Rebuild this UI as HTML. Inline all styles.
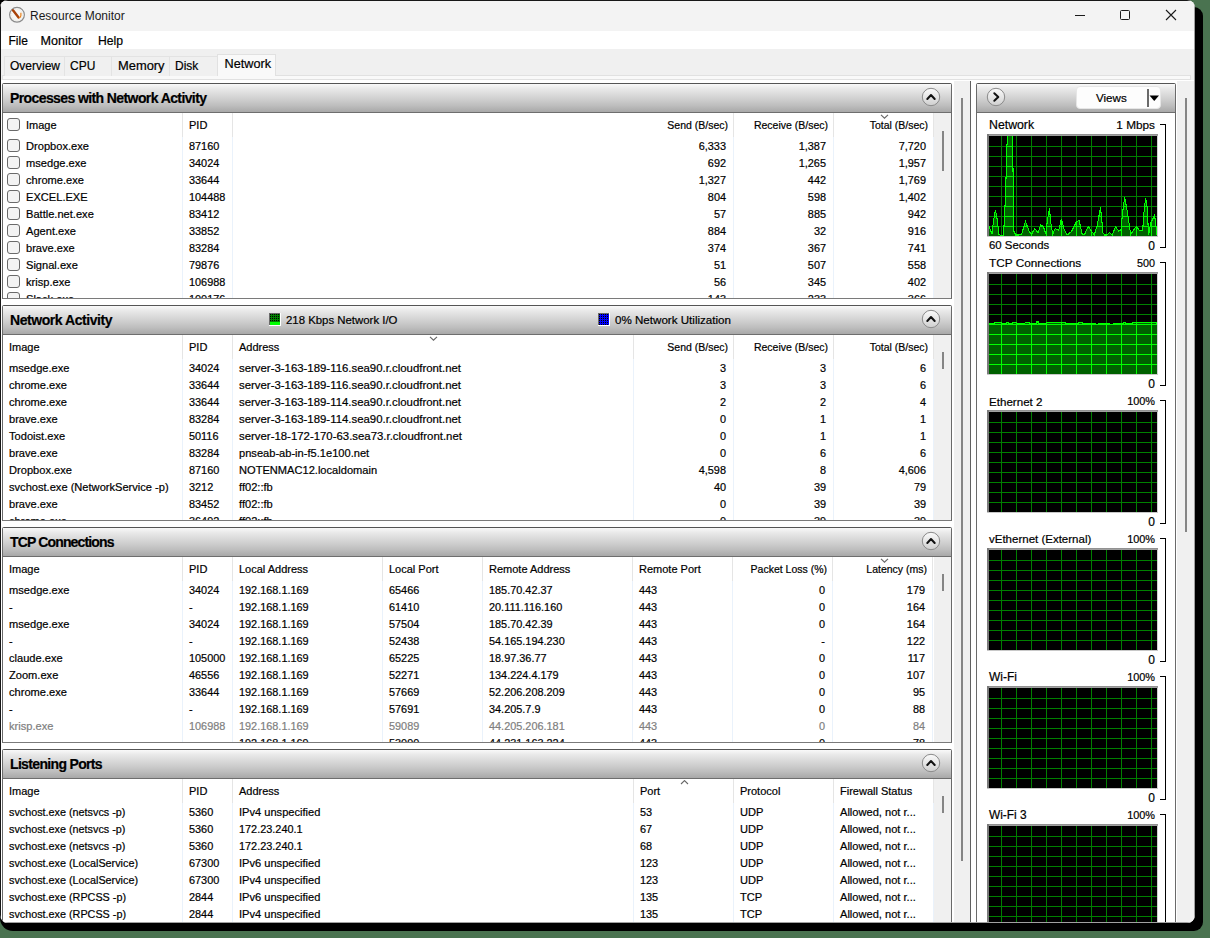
<!DOCTYPE html><html><head><meta charset="utf-8"><style>

html,body{margin:0;padding:0}
body{width:1210px;height:938px;position:relative;overflow:hidden;background:#4a7350;font-family:"Liberation Sans", sans-serif}
.t{position:absolute;white-space:pre;line-height:17px;height:17px;-webkit-text-stroke:0.2px currentColor}
.sec{position:absolute;left:2px;width:950px;box-sizing:border-box;border:1px solid #6a6a6a;border-top-color:#555;background:#fff;border-radius:2px 2px 0 0}
.hdr{position:absolute;left:3px;width:948px;height:28px;border-bottom:1px solid #6e6e6e;background:linear-gradient(#f9f9f9 0%,#e8e8e8 18%,#d2d2d2 50%,#bdbdbd 78%,#a8a8a8 100%)}
.cb{position:absolute;width:11px;height:11px;border:1px solid #6a6a6a;border-radius:3px;background:#f3f3f3}

</style></head><body>
<div style="position:absolute;left:0px;top:7px;width:1203px;height:924px;background:#000;border-radius:0 9px 9px 13px"></div>
<div style="position:absolute;left:0;top:0;width:10px;height:10px;background:#000"></div>
<div id="win" style="position:absolute;left:0;top:0;width:1195px;height:923px;background:#fff;border-radius:8px;overflow:hidden">
<div style="position:absolute;left:0;top:0;width:1195px;height:31px;background:#f3f3f3"></div>
<svg style="position:absolute;left:8px;top:6px" width="18" height="18"><circle cx="9" cy="8.8" r="7.4" fill="#f6f6f6" stroke="#8c8c8c" stroke-width="1.2"/><circle cx="9" cy="8.8" r="5.6" fill="none" stroke="#e2dccf" stroke-width="0.7" stroke-dasharray="1 1"/><polyline points="5,4.2 10.6,11.4" stroke="#a8420a" stroke-width="2.4" stroke-linecap="round"/><path d="M12.9,6.8 L12.9,9.6 Q12.9,11.6 10.9,11.8" fill="none" stroke="#e8801a" stroke-width="1.2"/></svg>
<div class="t" style="left:30px;top:8px;font-size:12px;color:#1a1a1a;font-weight:normal;-webkit-text-stroke:0;">Resource Monitor</div>
<div style="position:absolute;left:1075px;top:15px;width:10px;height:1px;background:#1a1a1a"></div>
<div style="position:absolute;left:1120px;top:10px;width:8px;height:8px;border:1px solid #1a1a1a;border-radius:1.5px"></div>
<svg style="position:absolute;left:1165px;top:9px" width="12" height="12"><path d="M1,1 L11,11 M11,1 L1,11" stroke="#1a1a1a" stroke-width="1.1"/></svg>
<div class="t" style="left:8.5px;top:33px;font-size:12px;color:#000;font-weight:normal;">File</div>
<div class="t" style="left:40.5px;top:33px;font-size:12.6px;color:#000;font-weight:normal;">Monitor</div>
<div class="t" style="left:98px;top:33px;font-size:12.2px;color:#000;font-weight:normal;">Help</div>
<div style="position:absolute;left:0;top:49px;width:1195px;height:31px;background:#f0f0f0"></div>
<div style="position:absolute;left:2px;top:75px;width:1189px;height:5px;box-sizing:border-box;border:1px solid #e1e1e1;background:#f9f9f9"></div>
<div style="position:absolute;left:4px;top:56px;width:61px;height:20px;box-sizing:border-box;border:1px solid #e3e3e3;border-bottom:none;background:#f0f0f0"></div>
<div class="t" style="left:10px;top:58px;font-size:12px;color:#000;font-weight:normal;">Overview</div>
<div style="position:absolute;left:64px;top:56px;width:48px;height:20px;box-sizing:border-box;border:1px solid #e3e3e3;border-bottom:none;background:#f0f0f0"></div>
<div class="t" style="left:70px;top:58px;font-size:12px;color:#000;font-weight:normal;">CPU</div>
<div style="position:absolute;left:111px;top:56px;width:59px;height:20px;box-sizing:border-box;border:1px solid #e3e3e3;border-bottom:none;background:#f0f0f0"></div>
<div class="t" style="left:118px;top:57px;font-size:12.9px;color:#000;font-weight:normal;">Memory</div>
<div style="position:absolute;left:169px;top:56px;width:49px;height:20px;box-sizing:border-box;border:1px solid #e3e3e3;border-bottom:none;background:#f0f0f0"></div>
<div class="t" style="left:175px;top:58px;font-size:12px;color:#000;font-weight:normal;">Disk</div>
<div style="position:absolute;left:217px;top:54px;width:59px;height:22px;box-sizing:border-box;border:1px solid #e1e1e1;border-bottom:none;background:#f9f9f9"></div>
<div class="t" style="left:224.5px;top:56px;font-size:12.7px;color:#000;font-weight:normal;">Network</div>
<div style="position:absolute;left:954px;top:81px;width:16px;height:842px;background:#f0f0f0"></div>
<div style="position:absolute;left:961px;top:98px;width:2px;height:763px;background:#858585"></div>
<div style="position:absolute;left:970px;top:81px;width:1px;height:842px;background:#606060"></div>
<div style="position:absolute;left:1177px;top:81px;width:17px;height:842px;background:#f0f0f0"></div>
<div style="position:absolute;left:1185px;top:98px;width:2px;height:434px;background:#858585"></div>
<div class="sec" style="top:83px;height:216px;border-bottom:1px solid #7a7a7a;"></div>
<div class="hdr" style="top:84px"></div>
<div class="t" style="left:10px;top:90px;font-size:14px;color:#000;font-weight:bold;letter-spacing:-0.6px;">Processes with Network Activity</div>
<svg style="position:absolute;left:921px;top:87px" width="20" height="20"><defs><linearGradient id="cg93197" x1="0" y1="0" x2="0" y2="1"><stop offset="0" stop-color="#fbfbfb"/><stop offset="1" stop-color="#cfcfcf"/></linearGradient></defs><circle cx="10" cy="10" r="8.7" fill="url(#cg93197)" stroke="#8a8a8a" stroke-width="1"/><polyline points="6.3,12 10,8 13.7,12" fill="none" stroke="#111" stroke-width="2" stroke-linecap="round" stroke-linejoin="round"/></svg>

<div style="position:absolute;left:934px;top:113px;width:17px;height:185px;background:#f0f0f0"></div>
<div style="position:absolute;left:942px;top:131px;width:2px;height:40px;background:#858585"></div>
<div style="position:absolute;left:182px;top:113px;width:1px;height:24px;background:#e5e5e5"></div>
<div style="position:absolute;left:182px;top:137px;width:1px;height:161px;background:#eaf2fb"></div>
<div style="position:absolute;left:232px;top:113px;width:1px;height:24px;background:#e5e5e5"></div>
<div style="position:absolute;left:232px;top:137px;width:1px;height:161px;background:#eaf2fb"></div>
<div style="position:absolute;left:733px;top:113px;width:1px;height:24px;background:#e5e5e5"></div>
<div style="position:absolute;left:733px;top:137px;width:1px;height:161px;background:#eaf2fb"></div>
<div style="position:absolute;left:833px;top:113px;width:1px;height:24px;background:#e5e5e5"></div>
<div style="position:absolute;left:833px;top:137px;width:1px;height:161px;background:#eaf2fb"></div>
<div style="position:absolute;left:933px;top:113px;width:1px;height:24px;background:#e5e5e5"></div>
<div style="position:absolute;left:933px;top:137px;width:1px;height:161px;background:#eaf2fb"></div>
<div class="t" style="left:26px;top:117px;font-size:11px;color:#000;font-weight:normal;">Image</div>
<div class="t" style="left:189px;top:117px;font-size:11px;color:#000;font-weight:normal;">PID</div>
<div class="t" style="right:467px;top:117px;font-size:10.5px;color:#000;font-weight:normal;text-align:right;">Send (B/sec)</div>
<div class="t" style="right:367px;top:117px;font-size:10.5px;color:#000;font-weight:normal;text-align:right;">Receive (B/sec)</div>
<div class="t" style="right:267px;top:117px;font-size:10.5px;color:#000;font-weight:normal;text-align:right;">Total (B/sec)</div>
<svg style="position:absolute;left:880.0px;top:113.5px" width="9" height="5"><polyline points="1,0.8 4.5,4.2 8,0.8" fill="none" stroke="#666" stroke-width="1.1"/></svg>
<div style="position:absolute;left:3px;top:137px;width:930px;height:161px;overflow:hidden">
<div class="t" style="left:23px;top:1px;font-size:11.1px;color:#000">Dropbox.exe</div>
<div class="t" style="left:186px;top:1px;font-size:10.9px;color:#000">87160</div>
<div class="t" style="right:207px;top:1px;font-size:10.9px;color:#000;text-align:right">6,333</div>
<div class="t" style="right:107px;top:1px;font-size:10.9px;color:#000;text-align:right">1,387</div>
<div class="t" style="right:7px;top:1px;font-size:10.9px;color:#000;text-align:right">7,720</div>
<div class="cb" style="left:4px;top:2px"></div>
<div class="t" style="left:23px;top:18px;font-size:11.1px;color:#000">msedge.exe</div>
<div class="t" style="left:186px;top:18px;font-size:10.9px;color:#000">34024</div>
<div class="t" style="right:207px;top:18px;font-size:10.9px;color:#000;text-align:right">692</div>
<div class="t" style="right:107px;top:18px;font-size:10.9px;color:#000;text-align:right">1,265</div>
<div class="t" style="right:7px;top:18px;font-size:10.9px;color:#000;text-align:right">1,957</div>
<div class="cb" style="left:4px;top:19px"></div>
<div class="t" style="left:23px;top:35px;font-size:11.1px;color:#000">chrome.exe</div>
<div class="t" style="left:186px;top:35px;font-size:10.9px;color:#000">33644</div>
<div class="t" style="right:207px;top:35px;font-size:10.9px;color:#000;text-align:right">1,327</div>
<div class="t" style="right:107px;top:35px;font-size:10.9px;color:#000;text-align:right">442</div>
<div class="t" style="right:7px;top:35px;font-size:10.9px;color:#000;text-align:right">1,769</div>
<div class="cb" style="left:4px;top:36px"></div>
<div class="t" style="left:23px;top:52px;font-size:11.1px;color:#000">EXCEL.EXE</div>
<div class="t" style="left:186px;top:52px;font-size:10.9px;color:#000">104488</div>
<div class="t" style="right:207px;top:52px;font-size:10.9px;color:#000;text-align:right">804</div>
<div class="t" style="right:107px;top:52px;font-size:10.9px;color:#000;text-align:right">598</div>
<div class="t" style="right:7px;top:52px;font-size:10.9px;color:#000;text-align:right">1,402</div>
<div class="cb" style="left:4px;top:53px"></div>
<div class="t" style="left:23px;top:69px;font-size:11.1px;color:#000">Battle.net.exe</div>
<div class="t" style="left:186px;top:69px;font-size:10.9px;color:#000">83412</div>
<div class="t" style="right:207px;top:69px;font-size:10.9px;color:#000;text-align:right">57</div>
<div class="t" style="right:107px;top:69px;font-size:10.9px;color:#000;text-align:right">885</div>
<div class="t" style="right:7px;top:69px;font-size:10.9px;color:#000;text-align:right">942</div>
<div class="cb" style="left:4px;top:70px"></div>
<div class="t" style="left:23px;top:86px;font-size:11.1px;color:#000">Agent.exe</div>
<div class="t" style="left:186px;top:86px;font-size:10.9px;color:#000">33852</div>
<div class="t" style="right:207px;top:86px;font-size:10.9px;color:#000;text-align:right">884</div>
<div class="t" style="right:107px;top:86px;font-size:10.9px;color:#000;text-align:right">32</div>
<div class="t" style="right:7px;top:86px;font-size:10.9px;color:#000;text-align:right">916</div>
<div class="cb" style="left:4px;top:87px"></div>
<div class="t" style="left:23px;top:103px;font-size:11.1px;color:#000">brave.exe</div>
<div class="t" style="left:186px;top:103px;font-size:10.9px;color:#000">83284</div>
<div class="t" style="right:207px;top:103px;font-size:10.9px;color:#000;text-align:right">374</div>
<div class="t" style="right:107px;top:103px;font-size:10.9px;color:#000;text-align:right">367</div>
<div class="t" style="right:7px;top:103px;font-size:10.9px;color:#000;text-align:right">741</div>
<div class="cb" style="left:4px;top:104px"></div>
<div class="t" style="left:23px;top:120px;font-size:11.1px;color:#000">Signal.exe</div>
<div class="t" style="left:186px;top:120px;font-size:10.9px;color:#000">79876</div>
<div class="t" style="right:207px;top:120px;font-size:10.9px;color:#000;text-align:right">51</div>
<div class="t" style="right:107px;top:120px;font-size:10.9px;color:#000;text-align:right">507</div>
<div class="t" style="right:7px;top:120px;font-size:10.9px;color:#000;text-align:right">558</div>
<div class="cb" style="left:4px;top:121px"></div>
<div class="t" style="left:23px;top:137px;font-size:11.1px;color:#000">krisp.exe</div>
<div class="t" style="left:186px;top:137px;font-size:10.9px;color:#000">106988</div>
<div class="t" style="right:207px;top:137px;font-size:10.9px;color:#000;text-align:right">56</div>
<div class="t" style="right:107px;top:137px;font-size:10.9px;color:#000;text-align:right">345</div>
<div class="t" style="right:7px;top:137px;font-size:10.9px;color:#000;text-align:right">402</div>
<div class="cb" style="left:4px;top:138px"></div>
<div class="t" style="left:23px;top:154px;font-size:11.1px;color:#000">Slack.exe</div>
<div class="t" style="left:186px;top:154px;font-size:10.9px;color:#000">100176</div>
<div class="t" style="right:207px;top:154px;font-size:10.9px;color:#000;text-align:right">143</div>
<div class="t" style="right:107px;top:154px;font-size:10.9px;color:#000;text-align:right">233</div>
<div class="t" style="right:7px;top:154px;font-size:10.9px;color:#000;text-align:right">366</div>
<div class="cb" style="left:4px;top:155px"></div>
</div>
<div class="cb" style="left:7px;top:118px"></div>
<div class="sec" style="top:305px;height:216px;border-bottom:1px solid #7a7a7a;"></div>
<div class="hdr" style="top:306px"></div>
<div class="t" style="left:10px;top:312px;font-size:14px;color:#000;font-weight:bold;letter-spacing:-0.45px;">Network Activity</div>
<svg style="position:absolute;left:921px;top:309px" width="20" height="20"><defs><linearGradient id="cg931319" x1="0" y1="0" x2="0" y2="1"><stop offset="0" stop-color="#fbfbfb"/><stop offset="1" stop-color="#cfcfcf"/></linearGradient></defs><circle cx="10" cy="10" r="8.7" fill="url(#cg931319)" stroke="#8a8a8a" stroke-width="1"/><polyline points="6.3,12 10,8 13.7,12" fill="none" stroke="#111" stroke-width="2" stroke-linecap="round" stroke-linejoin="round"/></svg>
<svg style="position:absolute;left:269px;top:313px" width="12" height="13" shape-rendering="crispEdges"><rect x="0" y="0" width="12" height="13" fill="#ffffff"/><rect x="0" y="0" width="11" height="1" fill="#6a6a6a"/><rect x="0" y="0" width="1" height="12" fill="#6a6a6a"/><rect x="1" y="1" width="10" height="11" fill="#008000"/><rect x="1" y="1" width="1" height="1" fill="#000"/><rect x="3" y="1" width="1" height="1" fill="#000"/><rect x="5" y="1" width="1" height="1" fill="#000"/><rect x="7" y="1" width="1" height="1" fill="#000"/><rect x="9" y="1" width="1" height="1" fill="#000"/><rect x="1" y="3" width="1" height="1" fill="#000"/><rect x="3" y="3" width="1" height="1" fill="#000"/><rect x="5" y="3" width="1" height="1" fill="#000"/><rect x="7" y="3" width="1" height="1" fill="#000"/><rect x="9" y="3" width="1" height="1" fill="#000"/><rect x="1" y="5" width="1" height="1" fill="#000"/><rect x="3" y="5" width="1" height="1" fill="#000"/><rect x="5" y="5" width="1" height="1" fill="#000"/><rect x="7" y="5" width="1" height="1" fill="#000"/><rect x="9" y="5" width="1" height="1" fill="#000"/><rect x="1" y="7" width="1" height="1" fill="#000"/><rect x="3" y="7" width="1" height="1" fill="#000"/><rect x="5" y="7" width="1" height="1" fill="#000"/><rect x="7" y="7" width="1" height="1" fill="#000"/><rect x="9" y="7" width="1" height="1" fill="#000"/><rect x="1" y="9" width="10" height="3" fill="#00ff00"/></svg><svg style="position:absolute;left:598px;top:313px" width="12" height="13" shape-rendering="crispEdges"><rect x="0" y="0" width="12" height="13" fill="#ffffff"/><rect x="0" y="0" width="11" height="1" fill="#6a6a6a"/><rect x="0" y="0" width="1" height="12" fill="#6a6a6a"/><rect x="1" y="1" width="10" height="11" fill="#0000ff"/><rect x="1" y="1" width="1" height="1" fill="#000"/><rect x="3" y="1" width="1" height="1" fill="#000"/><rect x="5" y="1" width="1" height="1" fill="#000"/><rect x="7" y="1" width="1" height="1" fill="#000"/><rect x="9" y="1" width="1" height="1" fill="#000"/><rect x="1" y="3" width="1" height="1" fill="#000"/><rect x="3" y="3" width="1" height="1" fill="#000"/><rect x="5" y="3" width="1" height="1" fill="#000"/><rect x="7" y="3" width="1" height="1" fill="#000"/><rect x="9" y="3" width="1" height="1" fill="#000"/><rect x="1" y="5" width="1" height="1" fill="#000"/><rect x="3" y="5" width="1" height="1" fill="#000"/><rect x="5" y="5" width="1" height="1" fill="#000"/><rect x="7" y="5" width="1" height="1" fill="#000"/><rect x="9" y="5" width="1" height="1" fill="#000"/><rect x="1" y="7" width="1" height="1" fill="#000"/><rect x="3" y="7" width="1" height="1" fill="#000"/><rect x="5" y="7" width="1" height="1" fill="#000"/><rect x="7" y="7" width="1" height="1" fill="#000"/><rect x="9" y="7" width="1" height="1" fill="#000"/><rect x="1" y="9" width="1" height="1" fill="#000"/><rect x="3" y="9" width="1" height="1" fill="#000"/><rect x="5" y="9" width="1" height="1" fill="#000"/><rect x="7" y="9" width="1" height="1" fill="#000"/><rect x="9" y="9" width="1" height="1" fill="#000"/><rect x="1" y="11" width="1" height="1" fill="#000"/><rect x="3" y="11" width="1" height="1" fill="#000"/><rect x="5" y="11" width="1" height="1" fill="#000"/><rect x="7" y="11" width="1" height="1" fill="#000"/><rect x="9" y="11" width="1" height="1" fill="#000"/></svg>
<div style="position:absolute;left:934px;top:335px;width:17px;height:185px;background:#f0f0f0"></div>
<div style="position:absolute;left:942px;top:352px;width:2px;height:17px;background:#858585"></div>
<div style="position:absolute;left:182px;top:335px;width:1px;height:24px;background:#e5e5e5"></div>
<div style="position:absolute;left:182px;top:359px;width:1px;height:161px;background:#eaf2fb"></div>
<div style="position:absolute;left:232px;top:335px;width:1px;height:24px;background:#e5e5e5"></div>
<div style="position:absolute;left:232px;top:359px;width:1px;height:161px;background:#eaf2fb"></div>
<div style="position:absolute;left:633px;top:335px;width:1px;height:24px;background:#e5e5e5"></div>
<div style="position:absolute;left:633px;top:359px;width:1px;height:161px;background:#eaf2fb"></div>
<div style="position:absolute;left:733px;top:335px;width:1px;height:24px;background:#e5e5e5"></div>
<div style="position:absolute;left:733px;top:359px;width:1px;height:161px;background:#eaf2fb"></div>
<div style="position:absolute;left:833px;top:335px;width:1px;height:24px;background:#e5e5e5"></div>
<div style="position:absolute;left:833px;top:359px;width:1px;height:161px;background:#eaf2fb"></div>
<div style="position:absolute;left:933px;top:335px;width:1px;height:24px;background:#e5e5e5"></div>
<div style="position:absolute;left:933px;top:359px;width:1px;height:161px;background:#eaf2fb"></div>
<div class="t" style="left:9px;top:339px;font-size:11px;color:#000;font-weight:normal;">Image</div>
<div class="t" style="left:189px;top:339px;font-size:11px;color:#000;font-weight:normal;">PID</div>
<div class="t" style="left:239px;top:339px;font-size:11px;color:#000;font-weight:normal;">Address</div>
<div class="t" style="right:467px;top:339px;font-size:10.5px;color:#000;font-weight:normal;text-align:right;">Send (B/sec)</div>
<div class="t" style="right:367px;top:339px;font-size:10.5px;color:#000;font-weight:normal;text-align:right;">Receive (B/sec)</div>
<div class="t" style="right:267px;top:339px;font-size:10.5px;color:#000;font-weight:normal;text-align:right;">Total (B/sec)</div>
<svg style="position:absolute;left:429.0px;top:335.5px" width="9" height="5"><polyline points="1,0.8 4.5,4.2 8,0.8" fill="none" stroke="#666" stroke-width="1.1"/></svg>
<div style="position:absolute;left:3px;top:359px;width:930px;height:161px;overflow:hidden">
<div class="t" style="left:6px;top:1px;font-size:11.1px;color:#000">msedge.exe</div>
<div class="t" style="left:186px;top:1px;font-size:10.9px;color:#000">34024</div>
<div class="t" style="left:236px;top:1px;font-size:11.4px;color:#000">server-3-163-189-116.sea90.r.cloudfront.net</div>
<div class="t" style="right:207px;top:1px;font-size:10.9px;color:#000;text-align:right">3</div>
<div class="t" style="right:107px;top:1px;font-size:10.9px;color:#000;text-align:right">3</div>
<div class="t" style="right:7px;top:1px;font-size:10.9px;color:#000;text-align:right">6</div>
<div class="t" style="left:6px;top:18px;font-size:11.1px;color:#000">chrome.exe</div>
<div class="t" style="left:186px;top:18px;font-size:10.9px;color:#000">33644</div>
<div class="t" style="left:236px;top:18px;font-size:11.4px;color:#000">server-3-163-189-116.sea90.r.cloudfront.net</div>
<div class="t" style="right:207px;top:18px;font-size:10.9px;color:#000;text-align:right">3</div>
<div class="t" style="right:107px;top:18px;font-size:10.9px;color:#000;text-align:right">3</div>
<div class="t" style="right:7px;top:18px;font-size:10.9px;color:#000;text-align:right">6</div>
<div class="t" style="left:6px;top:35px;font-size:11.1px;color:#000">chrome.exe</div>
<div class="t" style="left:186px;top:35px;font-size:10.9px;color:#000">33644</div>
<div class="t" style="left:236px;top:35px;font-size:11.4px;color:#000">server-3-163-189-114.sea90.r.cloudfront.net</div>
<div class="t" style="right:207px;top:35px;font-size:10.9px;color:#000;text-align:right">2</div>
<div class="t" style="right:107px;top:35px;font-size:10.9px;color:#000;text-align:right">2</div>
<div class="t" style="right:7px;top:35px;font-size:10.9px;color:#000;text-align:right">4</div>
<div class="t" style="left:6px;top:52px;font-size:11.1px;color:#000">brave.exe</div>
<div class="t" style="left:186px;top:52px;font-size:10.9px;color:#000">83284</div>
<div class="t" style="left:236px;top:52px;font-size:11.4px;color:#000">server-3-163-189-114.sea90.r.cloudfront.net</div>
<div class="t" style="right:207px;top:52px;font-size:10.9px;color:#000;text-align:right">0</div>
<div class="t" style="right:107px;top:52px;font-size:10.9px;color:#000;text-align:right">1</div>
<div class="t" style="right:7px;top:52px;font-size:10.9px;color:#000;text-align:right">1</div>
<div class="t" style="left:6px;top:69px;font-size:11.1px;color:#000">Todoist.exe</div>
<div class="t" style="left:186px;top:69px;font-size:10.9px;color:#000">50116</div>
<div class="t" style="left:236px;top:69px;font-size:11.4px;color:#000">server-18-172-170-63.sea73.r.cloudfront.net</div>
<div class="t" style="right:207px;top:69px;font-size:10.9px;color:#000;text-align:right">0</div>
<div class="t" style="right:107px;top:69px;font-size:10.9px;color:#000;text-align:right">1</div>
<div class="t" style="right:7px;top:69px;font-size:10.9px;color:#000;text-align:right">1</div>
<div class="t" style="left:6px;top:86px;font-size:11.1px;color:#000">brave.exe</div>
<div class="t" style="left:186px;top:86px;font-size:10.9px;color:#000">83284</div>
<div class="t" style="left:236px;top:86px;font-size:11.1px;color:#000">pnseab-ab-in-f5.1e100.net</div>
<div class="t" style="right:207px;top:86px;font-size:10.9px;color:#000;text-align:right">0</div>
<div class="t" style="right:107px;top:86px;font-size:10.9px;color:#000;text-align:right">6</div>
<div class="t" style="right:7px;top:86px;font-size:10.9px;color:#000;text-align:right">6</div>
<div class="t" style="left:6px;top:103px;font-size:11.1px;color:#000">Dropbox.exe</div>
<div class="t" style="left:186px;top:103px;font-size:10.9px;color:#000">87160</div>
<div class="t" style="left:236px;top:103px;font-size:11.1px;color:#000">NOTENMAC12.localdomain</div>
<div class="t" style="right:207px;top:103px;font-size:10.9px;color:#000;text-align:right">4,598</div>
<div class="t" style="right:107px;top:103px;font-size:10.9px;color:#000;text-align:right">8</div>
<div class="t" style="right:7px;top:103px;font-size:10.9px;color:#000;text-align:right">4,606</div>
<div class="t" style="left:6px;top:120px;font-size:11.1px;color:#000">svchost.exe (NetworkService -p)</div>
<div class="t" style="left:186px;top:120px;font-size:10.9px;color:#000">3212</div>
<div class="t" style="left:236px;top:120px;font-size:11.1px;color:#000">ff02::fb</div>
<div class="t" style="right:207px;top:120px;font-size:10.9px;color:#000;text-align:right">40</div>
<div class="t" style="right:107px;top:120px;font-size:10.9px;color:#000;text-align:right">39</div>
<div class="t" style="right:7px;top:120px;font-size:10.9px;color:#000;text-align:right">79</div>
<div class="t" style="left:6px;top:137px;font-size:11.1px;color:#000">brave.exe</div>
<div class="t" style="left:186px;top:137px;font-size:10.9px;color:#000">83452</div>
<div class="t" style="left:236px;top:137px;font-size:11.1px;color:#000">ff02::fb</div>
<div class="t" style="right:207px;top:137px;font-size:10.9px;color:#000;text-align:right">0</div>
<div class="t" style="right:107px;top:137px;font-size:10.9px;color:#000;text-align:right">39</div>
<div class="t" style="right:7px;top:137px;font-size:10.9px;color:#000;text-align:right">39</div>
<div class="t" style="left:6px;top:154px;font-size:11.1px;color:#000">chrome.exe</div>
<div class="t" style="left:186px;top:154px;font-size:10.9px;color:#000">36492</div>
<div class="t" style="left:236px;top:154px;font-size:11.1px;color:#000">ff02::fb</div>
<div class="t" style="right:207px;top:154px;font-size:10.9px;color:#000;text-align:right">0</div>
<div class="t" style="right:107px;top:154px;font-size:10.9px;color:#000;text-align:right">39</div>
<div class="t" style="right:7px;top:154px;font-size:10.9px;color:#000;text-align:right">39</div>
</div>
<div class="t" style="left:286px;top:312px;font-size:11.4px;color:#000;font-weight:normal;">218 Kbps Network I/O</div>
<div class="t" style="left:615px;top:311px;font-size:11.6px;color:#000;font-weight:normal;">0% Network Utilization</div>
<div class="sec" style="top:527px;height:216px;border-bottom:1px solid #7a7a7a;"></div>
<div class="hdr" style="top:528px"></div>
<div class="t" style="left:10px;top:534px;font-size:14px;color:#000;font-weight:bold;letter-spacing:-0.85px;">TCP Connections</div>
<svg style="position:absolute;left:921px;top:531px" width="20" height="20"><defs><linearGradient id="cg931541" x1="0" y1="0" x2="0" y2="1"><stop offset="0" stop-color="#fbfbfb"/><stop offset="1" stop-color="#cfcfcf"/></linearGradient></defs><circle cx="10" cy="10" r="8.7" fill="url(#cg931541)" stroke="#8a8a8a" stroke-width="1"/><polyline points="6.3,12 10,8 13.7,12" fill="none" stroke="#111" stroke-width="2" stroke-linecap="round" stroke-linejoin="round"/></svg>

<div style="position:absolute;left:934px;top:557px;width:17px;height:185px;background:#f0f0f0"></div>
<div style="position:absolute;left:942px;top:574px;width:2px;height:17px;background:#858585"></div>
<div style="position:absolute;left:182px;top:557px;width:1px;height:24px;background:#e5e5e5"></div>
<div style="position:absolute;left:182px;top:581px;width:1px;height:161px;background:#eaf2fb"></div>
<div style="position:absolute;left:232px;top:557px;width:1px;height:24px;background:#e5e5e5"></div>
<div style="position:absolute;left:232px;top:581px;width:1px;height:161px;background:#eaf2fb"></div>
<div style="position:absolute;left:382px;top:557px;width:1px;height:24px;background:#e5e5e5"></div>
<div style="position:absolute;left:382px;top:581px;width:1px;height:161px;background:#eaf2fb"></div>
<div style="position:absolute;left:482px;top:557px;width:1px;height:24px;background:#e5e5e5"></div>
<div style="position:absolute;left:482px;top:581px;width:1px;height:161px;background:#eaf2fb"></div>
<div style="position:absolute;left:632px;top:557px;width:1px;height:24px;background:#e5e5e5"></div>
<div style="position:absolute;left:632px;top:581px;width:1px;height:161px;background:#eaf2fb"></div>
<div style="position:absolute;left:732px;top:557px;width:1px;height:24px;background:#e5e5e5"></div>
<div style="position:absolute;left:732px;top:581px;width:1px;height:161px;background:#eaf2fb"></div>
<div style="position:absolute;left:832px;top:557px;width:1px;height:24px;background:#e5e5e5"></div>
<div style="position:absolute;left:832px;top:581px;width:1px;height:161px;background:#eaf2fb"></div>
<div style="position:absolute;left:932px;top:557px;width:1px;height:24px;background:#e5e5e5"></div>
<div style="position:absolute;left:932px;top:581px;width:1px;height:161px;background:#eaf2fb"></div>
<div class="t" style="left:9px;top:561px;font-size:11px;color:#000;font-weight:normal;">Image</div>
<div class="t" style="left:189px;top:561px;font-size:11px;color:#000;font-weight:normal;">PID</div>
<div class="t" style="left:239px;top:561px;font-size:11px;color:#000;font-weight:normal;">Local Address</div>
<div class="t" style="left:389px;top:561px;font-size:11px;color:#000;font-weight:normal;">Local Port</div>
<div class="t" style="left:489px;top:561px;font-size:11px;color:#000;font-weight:normal;">Remote Address</div>
<div class="t" style="left:639px;top:561px;font-size:11px;color:#000;font-weight:normal;">Remote Port</div>
<div class="t" style="right:368px;top:561px;font-size:10.5px;color:#000;font-weight:normal;text-align:right;">Packet Loss (%)</div>
<div class="t" style="right:268px;top:561px;font-size:10.5px;color:#000;font-weight:normal;text-align:right;">Latency (ms)</div>
<svg style="position:absolute;left:880.0px;top:557.5px" width="9" height="5"><polyline points="1,0.8 4.5,4.2 8,0.8" fill="none" stroke="#666" stroke-width="1.1"/></svg>
<div style="position:absolute;left:3px;top:581px;width:930px;height:161px;overflow:hidden">
<div class="t" style="left:6px;top:1px;font-size:11.1px;color:#000">msedge.exe</div>
<div class="t" style="left:186px;top:1px;font-size:10.9px;color:#000">34024</div>
<div class="t" style="left:236px;top:1px;font-size:10.9px;color:#000">192.168.1.169</div>
<div class="t" style="left:386px;top:1px;font-size:10.9px;color:#000">65466</div>
<div class="t" style="left:486px;top:1px;font-size:10.9px;color:#000">185.70.42.37</div>
<div class="t" style="left:636px;top:1px;font-size:10.9px;color:#000">443</div>
<div class="t" style="right:108px;top:1px;font-size:10.9px;color:#000;text-align:right">0</div>
<div class="t" style="right:8px;top:1px;font-size:10.9px;color:#000;text-align:right">179</div>
<div class="t" style="left:6px;top:18px;font-size:10.9px;color:#000">-</div>
<div class="t" style="left:186px;top:18px;font-size:10.9px;color:#000">-</div>
<div class="t" style="left:236px;top:18px;font-size:10.9px;color:#000">192.168.1.169</div>
<div class="t" style="left:386px;top:18px;font-size:10.9px;color:#000">61410</div>
<div class="t" style="left:486px;top:18px;font-size:10.9px;color:#000">20.111.116.160</div>
<div class="t" style="left:636px;top:18px;font-size:10.9px;color:#000">443</div>
<div class="t" style="right:108px;top:18px;font-size:10.9px;color:#000;text-align:right">0</div>
<div class="t" style="right:8px;top:18px;font-size:10.9px;color:#000;text-align:right">164</div>
<div class="t" style="left:6px;top:35px;font-size:11.1px;color:#000">msedge.exe</div>
<div class="t" style="left:186px;top:35px;font-size:10.9px;color:#000">34024</div>
<div class="t" style="left:236px;top:35px;font-size:10.9px;color:#000">192.168.1.169</div>
<div class="t" style="left:386px;top:35px;font-size:10.9px;color:#000">57504</div>
<div class="t" style="left:486px;top:35px;font-size:10.9px;color:#000">185.70.42.39</div>
<div class="t" style="left:636px;top:35px;font-size:10.9px;color:#000">443</div>
<div class="t" style="right:108px;top:35px;font-size:10.9px;color:#000;text-align:right">0</div>
<div class="t" style="right:8px;top:35px;font-size:10.9px;color:#000;text-align:right">164</div>
<div class="t" style="left:6px;top:52px;font-size:10.9px;color:#000">-</div>
<div class="t" style="left:186px;top:52px;font-size:10.9px;color:#000">-</div>
<div class="t" style="left:236px;top:52px;font-size:10.9px;color:#000">192.168.1.169</div>
<div class="t" style="left:386px;top:52px;font-size:10.9px;color:#000">52438</div>
<div class="t" style="left:486px;top:52px;font-size:10.9px;color:#000">54.165.194.230</div>
<div class="t" style="left:636px;top:52px;font-size:10.9px;color:#000">443</div>
<div class="t" style="right:108px;top:52px;font-size:10.9px;color:#000;text-align:right">-</div>
<div class="t" style="right:8px;top:52px;font-size:10.9px;color:#000;text-align:right">122</div>
<div class="t" style="left:6px;top:69px;font-size:11.1px;color:#000">claude.exe</div>
<div class="t" style="left:186px;top:69px;font-size:10.9px;color:#000">105000</div>
<div class="t" style="left:236px;top:69px;font-size:10.9px;color:#000">192.168.1.169</div>
<div class="t" style="left:386px;top:69px;font-size:10.9px;color:#000">65225</div>
<div class="t" style="left:486px;top:69px;font-size:10.9px;color:#000">18.97.36.77</div>
<div class="t" style="left:636px;top:69px;font-size:10.9px;color:#000">443</div>
<div class="t" style="right:108px;top:69px;font-size:10.9px;color:#000;text-align:right">0</div>
<div class="t" style="right:8px;top:69px;font-size:10.9px;color:#000;text-align:right">117</div>
<div class="t" style="left:6px;top:86px;font-size:11.1px;color:#000">Zoom.exe</div>
<div class="t" style="left:186px;top:86px;font-size:10.9px;color:#000">46556</div>
<div class="t" style="left:236px;top:86px;font-size:10.9px;color:#000">192.168.1.169</div>
<div class="t" style="left:386px;top:86px;font-size:10.9px;color:#000">52271</div>
<div class="t" style="left:486px;top:86px;font-size:10.9px;color:#000">134.224.4.179</div>
<div class="t" style="left:636px;top:86px;font-size:10.9px;color:#000">443</div>
<div class="t" style="right:108px;top:86px;font-size:10.9px;color:#000;text-align:right">0</div>
<div class="t" style="right:8px;top:86px;font-size:10.9px;color:#000;text-align:right">107</div>
<div class="t" style="left:6px;top:103px;font-size:11.1px;color:#000">chrome.exe</div>
<div class="t" style="left:186px;top:103px;font-size:10.9px;color:#000">33644</div>
<div class="t" style="left:236px;top:103px;font-size:10.9px;color:#000">192.168.1.169</div>
<div class="t" style="left:386px;top:103px;font-size:10.9px;color:#000">57669</div>
<div class="t" style="left:486px;top:103px;font-size:10.9px;color:#000">52.206.208.209</div>
<div class="t" style="left:636px;top:103px;font-size:10.9px;color:#000">443</div>
<div class="t" style="right:108px;top:103px;font-size:10.9px;color:#000;text-align:right">0</div>
<div class="t" style="right:8px;top:103px;font-size:10.9px;color:#000;text-align:right">95</div>
<div class="t" style="left:6px;top:120px;font-size:10.9px;color:#000">-</div>
<div class="t" style="left:186px;top:120px;font-size:10.9px;color:#000">-</div>
<div class="t" style="left:236px;top:120px;font-size:10.9px;color:#000">192.168.1.169</div>
<div class="t" style="left:386px;top:120px;font-size:10.9px;color:#000">57691</div>
<div class="t" style="left:486px;top:120px;font-size:10.9px;color:#000">34.205.7.9</div>
<div class="t" style="left:636px;top:120px;font-size:10.9px;color:#000">443</div>
<div class="t" style="right:108px;top:120px;font-size:10.9px;color:#000;text-align:right">0</div>
<div class="t" style="right:8px;top:120px;font-size:10.9px;color:#000;text-align:right">88</div>
<div class="t" style="left:6px;top:137px;font-size:11.1px;color:#808080">krisp.exe</div>
<div class="t" style="left:186px;top:137px;font-size:10.9px;color:#808080">106988</div>
<div class="t" style="left:236px;top:137px;font-size:10.9px;color:#808080">192.168.1.169</div>
<div class="t" style="left:386px;top:137px;font-size:10.9px;color:#808080">59089</div>
<div class="t" style="left:486px;top:137px;font-size:10.9px;color:#808080">44.205.206.181</div>
<div class="t" style="left:636px;top:137px;font-size:10.9px;color:#808080">443</div>
<div class="t" style="right:108px;top:137px;font-size:10.9px;color:#808080;text-align:right">0</div>
<div class="t" style="right:8px;top:137px;font-size:10.9px;color:#808080;text-align:right">84</div>
<div class="t" style="left:6px;top:154px;font-size:10.9px;color:#000">-</div>
<div class="t" style="left:186px;top:154px;font-size:10.9px;color:#000">-</div>
<div class="t" style="left:236px;top:154px;font-size:10.9px;color:#000">192.168.1.169</div>
<div class="t" style="left:386px;top:154px;font-size:10.9px;color:#000">53090</div>
<div class="t" style="left:486px;top:154px;font-size:10.9px;color:#000">44.231.163.224</div>
<div class="t" style="left:636px;top:154px;font-size:10.9px;color:#000">443</div>
<div class="t" style="right:108px;top:154px;font-size:10.9px;color:#000;text-align:right">0</div>
<div class="t" style="right:8px;top:154px;font-size:10.9px;color:#000;text-align:right">78</div>
</div>
<div class="sec" style="top:749px;height:174px;border-bottom:none;"></div>
<div class="hdr" style="top:750px"></div>
<div class="t" style="left:10px;top:756px;font-size:14px;color:#000;font-weight:bold;letter-spacing:-0.66px;">Listening Ports</div>
<svg style="position:absolute;left:921px;top:753px" width="20" height="20"><defs><linearGradient id="cg931763" x1="0" y1="0" x2="0" y2="1"><stop offset="0" stop-color="#fbfbfb"/><stop offset="1" stop-color="#cfcfcf"/></linearGradient></defs><circle cx="10" cy="10" r="8.7" fill="url(#cg931763)" stroke="#8a8a8a" stroke-width="1"/><polyline points="6.3,12 10,8 13.7,12" fill="none" stroke="#111" stroke-width="2" stroke-linecap="round" stroke-linejoin="round"/></svg>

<div style="position:absolute;left:934px;top:779px;width:17px;height:144px;background:#f0f0f0"></div>
<div style="position:absolute;left:942px;top:796px;width:2px;height:17px;background:#858585"></div>
<div style="position:absolute;left:182px;top:779px;width:1px;height:24px;background:#e5e5e5"></div>
<div style="position:absolute;left:182px;top:803px;width:1px;height:120px;background:#eaf2fb"></div>
<div style="position:absolute;left:232px;top:779px;width:1px;height:24px;background:#e5e5e5"></div>
<div style="position:absolute;left:232px;top:803px;width:1px;height:120px;background:#eaf2fb"></div>
<div style="position:absolute;left:633px;top:779px;width:1px;height:24px;background:#e5e5e5"></div>
<div style="position:absolute;left:633px;top:803px;width:1px;height:120px;background:#eaf2fb"></div>
<div style="position:absolute;left:733px;top:779px;width:1px;height:24px;background:#e5e5e5"></div>
<div style="position:absolute;left:733px;top:803px;width:1px;height:120px;background:#eaf2fb"></div>
<div style="position:absolute;left:833px;top:779px;width:1px;height:24px;background:#e5e5e5"></div>
<div style="position:absolute;left:833px;top:803px;width:1px;height:120px;background:#eaf2fb"></div>
<div style="position:absolute;left:933px;top:779px;width:1px;height:24px;background:#e5e5e5"></div>
<div style="position:absolute;left:933px;top:803px;width:1px;height:120px;background:#eaf2fb"></div>
<div class="t" style="left:9px;top:783px;font-size:11px;color:#000;font-weight:normal;">Image</div>
<div class="t" style="left:189px;top:783px;font-size:11px;color:#000;font-weight:normal;">PID</div>
<div class="t" style="left:239px;top:783px;font-size:11px;color:#000;font-weight:normal;">Address</div>
<div class="t" style="left:640px;top:783px;font-size:11px;color:#000;font-weight:normal;">Port</div>
<div class="t" style="left:740px;top:783px;font-size:11px;color:#000;font-weight:normal;">Protocol</div>
<div class="t" style="left:840px;top:783px;font-size:11px;color:#000;font-weight:normal;">Firewall Status</div>
<svg style="position:absolute;left:680.0px;top:779.5px" width="9" height="5"><polyline points="1,4 4.5,0.6 8,4" fill="none" stroke="#666" stroke-width="1.1"/></svg>
<div style="position:absolute;left:3px;top:803px;width:930px;height:120px;overflow:hidden">
<div class="t" style="left:6px;top:1px;font-size:10.8px;color:#000">svchost.exe (netsvcs -p)</div>
<div class="t" style="left:186px;top:1px;font-size:10.9px;color:#000">5360</div>
<div class="t" style="left:236px;top:1px;font-size:11.1px;color:#000">IPv4 unspecified</div>
<div class="t" style="left:637px;top:1px;font-size:10.9px;color:#000">53</div>
<div class="t" style="left:737px;top:1px;font-size:11.1px;color:#000">UDP</div>
<div class="t" style="left:837px;top:1px;font-size:11.1px;color:#000">Allowed, not r...</div>
<div class="t" style="left:6px;top:18px;font-size:10.8px;color:#000">svchost.exe (netsvcs -p)</div>
<div class="t" style="left:186px;top:18px;font-size:10.9px;color:#000">5360</div>
<div class="t" style="left:236px;top:18px;font-size:10.9px;color:#000">172.23.240.1</div>
<div class="t" style="left:637px;top:18px;font-size:10.9px;color:#000">67</div>
<div class="t" style="left:737px;top:18px;font-size:11.1px;color:#000">UDP</div>
<div class="t" style="left:837px;top:18px;font-size:11.1px;color:#000">Allowed, not r...</div>
<div class="t" style="left:6px;top:35px;font-size:10.8px;color:#000">svchost.exe (netsvcs -p)</div>
<div class="t" style="left:186px;top:35px;font-size:10.9px;color:#000">5360</div>
<div class="t" style="left:236px;top:35px;font-size:10.9px;color:#000">172.23.240.1</div>
<div class="t" style="left:637px;top:35px;font-size:10.9px;color:#000">68</div>
<div class="t" style="left:737px;top:35px;font-size:11.1px;color:#000">UDP</div>
<div class="t" style="left:837px;top:35px;font-size:11.1px;color:#000">Allowed, not r...</div>
<div class="t" style="left:6px;top:52px;font-size:10.8px;color:#000">svchost.exe (LocalService)</div>
<div class="t" style="left:186px;top:52px;font-size:10.9px;color:#000">67300</div>
<div class="t" style="left:236px;top:52px;font-size:11.1px;color:#000">IPv6 unspecified</div>
<div class="t" style="left:637px;top:52px;font-size:10.9px;color:#000">123</div>
<div class="t" style="left:737px;top:52px;font-size:11.1px;color:#000">UDP</div>
<div class="t" style="left:837px;top:52px;font-size:11.1px;color:#000">Allowed, not r...</div>
<div class="t" style="left:6px;top:69px;font-size:10.8px;color:#000">svchost.exe (LocalService)</div>
<div class="t" style="left:186px;top:69px;font-size:10.9px;color:#000">67300</div>
<div class="t" style="left:236px;top:69px;font-size:11.1px;color:#000">IPv4 unspecified</div>
<div class="t" style="left:637px;top:69px;font-size:10.9px;color:#000">123</div>
<div class="t" style="left:737px;top:69px;font-size:11.1px;color:#000">UDP</div>
<div class="t" style="left:837px;top:69px;font-size:11.1px;color:#000">Allowed, not r...</div>
<div class="t" style="left:6px;top:86px;font-size:10.8px;color:#000">svchost.exe (RPCSS -p)</div>
<div class="t" style="left:186px;top:86px;font-size:10.9px;color:#000">2844</div>
<div class="t" style="left:236px;top:86px;font-size:11.1px;color:#000">IPv6 unspecified</div>
<div class="t" style="left:637px;top:86px;font-size:10.9px;color:#000">135</div>
<div class="t" style="left:737px;top:86px;font-size:11.1px;color:#000">TCP</div>
<div class="t" style="left:837px;top:86px;font-size:11.1px;color:#000">Allowed, not r...</div>
<div class="t" style="left:6px;top:103px;font-size:10.8px;color:#000">svchost.exe (RPCSS -p)</div>
<div class="t" style="left:186px;top:103px;font-size:10.9px;color:#000">2844</div>
<div class="t" style="left:236px;top:103px;font-size:11.1px;color:#000">IPv4 unspecified</div>
<div class="t" style="left:637px;top:103px;font-size:10.9px;color:#000">135</div>
<div class="t" style="left:737px;top:103px;font-size:11.1px;color:#000">TCP</div>
<div class="t" style="left:837px;top:103px;font-size:11.1px;color:#000">Allowed, not r...</div>
<div class="t" style="left:6px;top:120px;font-size:10.8px;color:#000">svchost.exe (RPCSS -p)</div>
<div class="t" style="left:186px;top:120px;font-size:10.9px;color:#000">2844</div>
<div class="t" style="left:236px;top:120px;font-size:11.1px;color:#000">IPv4 unspecified</div>
<div class="t" style="left:637px;top:120px;font-size:10.9px;color:#000">135</div>
<div class="t" style="left:737px;top:120px;font-size:11.1px;color:#000">TCP</div>
<div class="t" style="left:837px;top:120px;font-size:11.1px;color:#000">Allowed, not r...</div>
</div>
<div class="sec" style="left:976px;top:83px;width:200px;height:840px;border-bottom:none"></div>
<div class="hdr" style="left:977px;top:84px;width:198px"></div>
<svg style="position:absolute;left:986px;top:87px" width="20" height="20"><defs><linearGradient id="cr99697" x1="0" y1="0" x2="0" y2="1"><stop offset="0" stop-color="#fbfbfb"/><stop offset="1" stop-color="#cfcfcf"/></linearGradient></defs><circle cx="10" cy="10" r="8.7" fill="url(#cr99697)" stroke="#8a8a8a" stroke-width="1"/><polyline points="8.3,6.3 12.3,10 8.3,13.8" fill="none" stroke="#111" stroke-width="2" stroke-linecap="round" stroke-linejoin="round"/></svg>
<div style="position:absolute;left:1076px;top:86px;width:85px;height:23px;box-sizing:border-box;border:1px solid #e6e6e6;border-radius:4px;background:#fdfdfd"></div>
<div class="t" style="left:1096px;top:89px;font-size:11.6px;color:#000;font-weight:normal;">Views</div>
<div style="position:absolute;left:1147px;top:89px;width:2px;height:18px;background:#6a6a6a"></div>
<svg style="position:absolute;left:1149px;top:95px" width="11" height="7"><polygon points="0.5,0.5 10,0.5 5.25,6" fill="#000"/></svg>
<div class="t" style="left:989px;top:117px;font-size:12.3px;color:#000;font-weight:normal;">Network</div>
<div class="t" style="right:40px;top:117px;font-size:11.8px;color:#000;font-weight:normal;text-align:right;">1 Mbps</div>
<div style="position:absolute;left:987px;top:134px;width:171px;height:103px;background:linear-gradient(90deg,#7a7a7a,#a0a0a0);"></div>
<div style="position:absolute;left:989px;top:134px;width:169px;height:2px;background:linear-gradient(#8a8a8a,#a8a8a8)"></div>
<div style="position:absolute;left:1157px;top:136px;width:1px;height:100px;background:#d0d0d0"></div>
<div style="position:absolute;left:987px;top:236px;width:171px;height:1px;background:#c8c8c8"></div>
<svg style="position:absolute;left:989px;top:136px" width="168" height="100"><rect width="168" height="100" fill="#000"/><rect x="12" y="0" width="1" height="100" fill="#008000"/><rect x="27" y="0" width="1" height="100" fill="#008000"/><rect x="42" y="0" width="1" height="100" fill="#008000"/><rect x="57" y="0" width="1" height="100" fill="#008000"/><rect x="72" y="0" width="1" height="100" fill="#008000"/><rect x="87" y="0" width="1" height="100" fill="#008000"/><rect x="102" y="0" width="1" height="100" fill="#008000"/><rect x="117" y="0" width="1" height="100" fill="#008000"/><rect x="132" y="0" width="1" height="100" fill="#008000"/><rect x="147" y="0" width="1" height="100" fill="#008000"/><rect x="162" y="0" width="1" height="100" fill="#008000"/><rect x="0" y="10" width="168" height="1" fill="#008000"/><rect x="0" y="20" width="168" height="1" fill="#008000"/><rect x="0" y="30" width="168" height="1" fill="#008000"/><rect x="0" y="40" width="168" height="1" fill="#008000"/><rect x="0" y="50" width="168" height="1" fill="#008000"/><rect x="0" y="60" width="168" height="1" fill="#008000"/><rect x="0" y="70" width="168" height="1" fill="#008000"/><rect x="0" y="80" width="168" height="1" fill="#008000"/><rect x="0" y="90" width="168" height="1" fill="#008000"/><defs><clipPath id="clip136"><polygon points="0,100 0,90 3,98 4.4,86 5.5,79 6.4,74 7.5,79 8.6,87 9.9,98.5 12,99.5 14.2,99.5 15.3,86 16.4,60 17.3,34 18.3,-2 23.5,-2 24.3,54 24.5,94.6 26.7,99 29.4,99 32.7,98 36.5,85.4 40.3,95.7 42.5,98.5 45.7,92.5 49,96.8 51.7,88.7 54.4,90.3 56.6,98 58.2,86 60.4,72.4 62,88 63.7,98 66.4,92.5 69.7,94.6 72.4,82.7 75.1,93.6 78.3,99 82.7,95.2 87.3,86 90.1,84.3 93.3,99 95.5,98.5 99.3,90.3 102.6,95.2 105.3,99 108.5,88.1 111.5,71.3 114,96.8 115.6,99 117.8,99 120.5,96.3 123.2,99 126.5,90.8 129.7,95.2 131.9,94.1 133.5,77.3 135.7,61 138.4,76.2 141.7,98.5 144.9,93.6 147.7,90.3 150.4,94.6 153.7,94.1 154.7,78.9 156.6,62 158,69.7 159.6,98.5 161.8,87 165.6,79.4 167.2,91.4 168,99 168,100"/></clipPath></defs><polygon points="0,100 0,90 3,98 4.4,86 5.5,79 6.4,74 7.5,79 8.6,87 9.9,98.5 12,99.5 14.2,99.5 15.3,86 16.4,60 17.3,34 18.3,-2 23.5,-2 24.3,54 24.5,94.6 26.7,99 29.4,99 32.7,98 36.5,85.4 40.3,95.7 42.5,98.5 45.7,92.5 49,96.8 51.7,88.7 54.4,90.3 56.6,98 58.2,86 60.4,72.4 62,88 63.7,98 66.4,92.5 69.7,94.6 72.4,82.7 75.1,93.6 78.3,99 82.7,95.2 87.3,86 90.1,84.3 93.3,99 95.5,98.5 99.3,90.3 102.6,95.2 105.3,99 108.5,88.1 111.5,71.3 114,96.8 115.6,99 117.8,99 120.5,96.3 123.2,99 126.5,90.8 129.7,95.2 131.9,94.1 133.5,77.3 135.7,61 138.4,76.2 141.7,98.5 144.9,93.6 147.7,90.3 150.4,94.6 153.7,94.1 154.7,78.9 156.6,62 158,69.7 159.6,98.5 161.8,87 165.6,79.4 167.2,91.4 168,99 168,100" fill="#006000"/><g clip-path="url(#clip136)"><rect x="12" y="0" width="1" height="100" fill="#00ff00"/><rect x="27" y="0" width="1" height="100" fill="#00ff00"/><rect x="42" y="0" width="1" height="100" fill="#00ff00"/><rect x="57" y="0" width="1" height="100" fill="#00ff00"/><rect x="72" y="0" width="1" height="100" fill="#00ff00"/><rect x="87" y="0" width="1" height="100" fill="#00ff00"/><rect x="102" y="0" width="1" height="100" fill="#00ff00"/><rect x="117" y="0" width="1" height="100" fill="#00ff00"/><rect x="132" y="0" width="1" height="100" fill="#00ff00"/><rect x="147" y="0" width="1" height="100" fill="#00ff00"/><rect x="162" y="0" width="1" height="100" fill="#00ff00"/><rect x="0" y="10" width="168" height="1" fill="#00ff00"/><rect x="0" y="20" width="168" height="1" fill="#00ff00"/><rect x="0" y="30" width="168" height="1" fill="#00ff00"/><rect x="0" y="40" width="168" height="1" fill="#00ff00"/><rect x="0" y="50" width="168" height="1" fill="#00ff00"/><rect x="0" y="60" width="168" height="1" fill="#00ff00"/><rect x="0" y="70" width="168" height="1" fill="#00ff00"/><rect x="0" y="80" width="168" height="1" fill="#00ff00"/><rect x="0" y="90" width="168" height="1" fill="#00ff00"/></g><polyline points="0,90 3,98 4.4,86 5.5,79 6.4,74 7.5,79 8.6,87 9.9,98.5 12,99.5 14.2,99.5 15.3,86 16.4,60 17.3,34 18.3,-2 23.5,-2 24.3,54 24.5,94.6 26.7,99 29.4,99 32.7,98 36.5,85.4 40.3,95.7 42.5,98.5 45.7,92.5 49,96.8 51.7,88.7 54.4,90.3 56.6,98 58.2,86 60.4,72.4 62,88 63.7,98 66.4,92.5 69.7,94.6 72.4,82.7 75.1,93.6 78.3,99 82.7,95.2 87.3,86 90.1,84.3 93.3,99 95.5,98.5 99.3,90.3 102.6,95.2 105.3,99 108.5,88.1 111.5,71.3 114,96.8 115.6,99 117.8,99 120.5,96.3 123.2,99 126.5,90.8 129.7,95.2 131.9,94.1 133.5,77.3 135.7,61 138.4,76.2 141.7,98.5 144.9,93.6 147.7,90.3 150.4,94.6 153.7,94.1 154.7,78.9 156.6,62 158,69.7 159.6,98.5 161.8,87 165.6,79.4 167.2,91.4 168,99" fill="none" stroke="#00ff00" stroke-width="1.05" stroke-linejoin="miter" shape-rendering="crispEdges"/></svg>
<div class="t" style="right:40px;top:238px;font-size:12px;color:#000;font-weight:normal;text-align:right;">0</div>
<div class="t" style="left:989px;top:237px;font-size:11.4px;color:#000;font-weight:normal;">60 Seconds</div>
<div style="position:absolute;left:1160px;top:124px;width:6px;height:124px;box-sizing:border-box;border:1px solid #000;border-left:none"></div>
<div class="t" style="left:989px;top:255px;font-size:11.8px;color:#000;font-weight:normal;">TCP Connections</div>
<div class="t" style="right:40px;top:255px;font-size:10.8px;color:#000;font-weight:normal;text-align:right;">500</div>
<div style="position:absolute;left:987px;top:272px;width:171px;height:103px;background:linear-gradient(90deg,#7a7a7a,#a0a0a0);"></div>
<div style="position:absolute;left:989px;top:272px;width:169px;height:2px;background:linear-gradient(#8a8a8a,#a8a8a8)"></div>
<div style="position:absolute;left:1157px;top:274px;width:1px;height:100px;background:#d0d0d0"></div>
<div style="position:absolute;left:987px;top:374px;width:171px;height:1px;background:#c8c8c8"></div>
<svg style="position:absolute;left:989px;top:274px" width="168" height="100"><rect width="168" height="100" fill="#000"/><rect x="12" y="0" width="1" height="100" fill="#008000"/><rect x="27" y="0" width="1" height="100" fill="#008000"/><rect x="42" y="0" width="1" height="100" fill="#008000"/><rect x="57" y="0" width="1" height="100" fill="#008000"/><rect x="72" y="0" width="1" height="100" fill="#008000"/><rect x="87" y="0" width="1" height="100" fill="#008000"/><rect x="102" y="0" width="1" height="100" fill="#008000"/><rect x="117" y="0" width="1" height="100" fill="#008000"/><rect x="132" y="0" width="1" height="100" fill="#008000"/><rect x="147" y="0" width="1" height="100" fill="#008000"/><rect x="162" y="0" width="1" height="100" fill="#008000"/><rect x="0" y="10" width="168" height="1" fill="#008000"/><rect x="0" y="20" width="168" height="1" fill="#008000"/><rect x="0" y="30" width="168" height="1" fill="#008000"/><rect x="0" y="40" width="168" height="1" fill="#008000"/><rect x="0" y="50" width="168" height="1" fill="#008000"/><rect x="0" y="60" width="168" height="1" fill="#008000"/><rect x="0" y="70" width="168" height="1" fill="#008000"/><rect x="0" y="80" width="168" height="1" fill="#008000"/><rect x="0" y="90" width="168" height="1" fill="#008000"/><defs><clipPath id="clip274"><polygon points="0,100 0,49.5 5,49.5 5.5,48.5 12.5,48.5 13,49.5 17.4,49.5 17.9,48.5 19.5,48.5 20,49.5 23,49.5 23.5,48.5 27.5,48.5 28,49.5 35.6,49.5 36.1,48.5 40.1,48.5 40.6,49.5 47,49.5 47.5,48.0 49.5,48.0 50,49.5 57,49.5 57.5,48.9 76.5,48.9 77,49.5 89,49.5 89.5,48.5 93.5,48.5 94,49.5 106.7,49.5 107.2,50.5 109.5,50.5 110,49.5 120.8,49.5 121.3,50.5 124.5,50.5 125,49.5 134,49.5 134.5,48.5 136.0,48.5 136.5,49.5 143,49.5 143.5,48.9 167.5,48.9 168,49.5 168,49.5 168,100"/></clipPath></defs><polygon points="0,100 0,49.5 5,49.5 5.5,48.5 12.5,48.5 13,49.5 17.4,49.5 17.9,48.5 19.5,48.5 20,49.5 23,49.5 23.5,48.5 27.5,48.5 28,49.5 35.6,49.5 36.1,48.5 40.1,48.5 40.6,49.5 47,49.5 47.5,48.0 49.5,48.0 50,49.5 57,49.5 57.5,48.9 76.5,48.9 77,49.5 89,49.5 89.5,48.5 93.5,48.5 94,49.5 106.7,49.5 107.2,50.5 109.5,50.5 110,49.5 120.8,49.5 121.3,50.5 124.5,50.5 125,49.5 134,49.5 134.5,48.5 136.0,48.5 136.5,49.5 143,49.5 143.5,48.9 167.5,48.9 168,49.5 168,49.5 168,100" fill="#006000"/><g clip-path="url(#clip274)"><rect x="12" y="0" width="1" height="100" fill="#00ff00"/><rect x="27" y="0" width="1" height="100" fill="#00ff00"/><rect x="42" y="0" width="1" height="100" fill="#00ff00"/><rect x="57" y="0" width="1" height="100" fill="#00ff00"/><rect x="72" y="0" width="1" height="100" fill="#00ff00"/><rect x="87" y="0" width="1" height="100" fill="#00ff00"/><rect x="102" y="0" width="1" height="100" fill="#00ff00"/><rect x="117" y="0" width="1" height="100" fill="#00ff00"/><rect x="132" y="0" width="1" height="100" fill="#00ff00"/><rect x="147" y="0" width="1" height="100" fill="#00ff00"/><rect x="162" y="0" width="1" height="100" fill="#00ff00"/><rect x="0" y="10" width="168" height="1" fill="#00ff00"/><rect x="0" y="20" width="168" height="1" fill="#00ff00"/><rect x="0" y="30" width="168" height="1" fill="#00ff00"/><rect x="0" y="40" width="168" height="1" fill="#00ff00"/><rect x="0" y="50" width="168" height="1" fill="#00ff00"/><rect x="0" y="60" width="168" height="1" fill="#00ff00"/><rect x="0" y="70" width="168" height="1" fill="#00ff00"/><rect x="0" y="80" width="168" height="1" fill="#00ff00"/><rect x="0" y="90" width="168" height="1" fill="#00ff00"/></g><polyline points="0,49.5 5,49.5 5.5,48.5 12.5,48.5 13,49.5 17.4,49.5 17.9,48.5 19.5,48.5 20,49.5 23,49.5 23.5,48.5 27.5,48.5 28,49.5 35.6,49.5 36.1,48.5 40.1,48.5 40.6,49.5 47,49.5 47.5,48.0 49.5,48.0 50,49.5 57,49.5 57.5,48.9 76.5,48.9 77,49.5 89,49.5 89.5,48.5 93.5,48.5 94,49.5 106.7,49.5 107.2,50.5 109.5,50.5 110,49.5 120.8,49.5 121.3,50.5 124.5,50.5 125,49.5 134,49.5 134.5,48.5 136.0,48.5 136.5,49.5 143,49.5 143.5,48.9 167.5,48.9 168,49.5 168,49.5" fill="none" stroke="#00ff00" stroke-width="1.05" stroke-linejoin="miter" shape-rendering="crispEdges"/></svg>
<div class="t" style="right:40px;top:376px;font-size:12px;color:#000;font-weight:normal;text-align:right;">0</div>
<div style="position:absolute;left:1160px;top:262px;width:6px;height:124px;box-sizing:border-box;border:1px solid #000;border-left:none"></div>
<div class="t" style="left:989px;top:393px;font-size:11.6px;color:#000;font-weight:normal;">Ethernet 2</div>
<div class="t" style="right:40px;top:393px;font-size:10.9px;color:#000;font-weight:normal;text-align:right;">100%</div>
<div style="position:absolute;left:987px;top:410px;width:171px;height:103px;background:linear-gradient(90deg,#7a7a7a,#a0a0a0);"></div>
<div style="position:absolute;left:989px;top:410px;width:169px;height:2px;background:linear-gradient(#8a8a8a,#a8a8a8)"></div>
<div style="position:absolute;left:1157px;top:412px;width:1px;height:100px;background:#d0d0d0"></div>
<div style="position:absolute;left:987px;top:512px;width:171px;height:1px;background:#c8c8c8"></div>
<svg style="position:absolute;left:989px;top:412px" width="168" height="100"><rect width="168" height="100" fill="#000"/><rect x="12" y="0" width="1" height="100" fill="#008000"/><rect x="27" y="0" width="1" height="100" fill="#008000"/><rect x="42" y="0" width="1" height="100" fill="#008000"/><rect x="57" y="0" width="1" height="100" fill="#008000"/><rect x="72" y="0" width="1" height="100" fill="#008000"/><rect x="87" y="0" width="1" height="100" fill="#008000"/><rect x="102" y="0" width="1" height="100" fill="#008000"/><rect x="117" y="0" width="1" height="100" fill="#008000"/><rect x="132" y="0" width="1" height="100" fill="#008000"/><rect x="147" y="0" width="1" height="100" fill="#008000"/><rect x="162" y="0" width="1" height="100" fill="#008000"/><rect x="0" y="10" width="168" height="1" fill="#008000"/><rect x="0" y="20" width="168" height="1" fill="#008000"/><rect x="0" y="30" width="168" height="1" fill="#008000"/><rect x="0" y="40" width="168" height="1" fill="#008000"/><rect x="0" y="50" width="168" height="1" fill="#008000"/><rect x="0" y="60" width="168" height="1" fill="#008000"/><rect x="0" y="70" width="168" height="1" fill="#008000"/><rect x="0" y="80" width="168" height="1" fill="#008000"/><rect x="0" y="90" width="168" height="1" fill="#008000"/></svg>
<div class="t" style="right:40px;top:514px;font-size:12px;color:#000;font-weight:normal;text-align:right;">0</div>
<div style="position:absolute;left:1160px;top:400px;width:6px;height:124px;box-sizing:border-box;border:1px solid #000;border-left:none"></div>
<div class="t" style="left:989px;top:531px;font-size:11.5px;color:#000;font-weight:normal;">vEthernet (External)</div>
<div class="t" style="right:40px;top:531px;font-size:10.9px;color:#000;font-weight:normal;text-align:right;">100%</div>
<div style="position:absolute;left:987px;top:548px;width:171px;height:103px;background:linear-gradient(90deg,#7a7a7a,#a0a0a0);"></div>
<div style="position:absolute;left:989px;top:548px;width:169px;height:2px;background:linear-gradient(#8a8a8a,#a8a8a8)"></div>
<div style="position:absolute;left:1157px;top:550px;width:1px;height:100px;background:#d0d0d0"></div>
<div style="position:absolute;left:987px;top:650px;width:171px;height:1px;background:#c8c8c8"></div>
<svg style="position:absolute;left:989px;top:550px" width="168" height="100"><rect width="168" height="100" fill="#000"/><rect x="12" y="0" width="1" height="100" fill="#008000"/><rect x="27" y="0" width="1" height="100" fill="#008000"/><rect x="42" y="0" width="1" height="100" fill="#008000"/><rect x="57" y="0" width="1" height="100" fill="#008000"/><rect x="72" y="0" width="1" height="100" fill="#008000"/><rect x="87" y="0" width="1" height="100" fill="#008000"/><rect x="102" y="0" width="1" height="100" fill="#008000"/><rect x="117" y="0" width="1" height="100" fill="#008000"/><rect x="132" y="0" width="1" height="100" fill="#008000"/><rect x="147" y="0" width="1" height="100" fill="#008000"/><rect x="162" y="0" width="1" height="100" fill="#008000"/><rect x="0" y="10" width="168" height="1" fill="#008000"/><rect x="0" y="20" width="168" height="1" fill="#008000"/><rect x="0" y="30" width="168" height="1" fill="#008000"/><rect x="0" y="40" width="168" height="1" fill="#008000"/><rect x="0" y="50" width="168" height="1" fill="#008000"/><rect x="0" y="60" width="168" height="1" fill="#008000"/><rect x="0" y="70" width="168" height="1" fill="#008000"/><rect x="0" y="80" width="168" height="1" fill="#008000"/><rect x="0" y="90" width="168" height="1" fill="#008000"/></svg>
<div class="t" style="right:40px;top:652px;font-size:12px;color:#000;font-weight:normal;text-align:right;">0</div>
<div style="position:absolute;left:1160px;top:538px;width:6px;height:124px;box-sizing:border-box;border:1px solid #000;border-left:none"></div>
<div class="t" style="left:989px;top:669px;font-size:12px;color:#000;font-weight:normal;">Wi-Fi</div>
<div class="t" style="right:40px;top:669px;font-size:10.9px;color:#000;font-weight:normal;text-align:right;">100%</div>
<div style="position:absolute;left:987px;top:686px;width:171px;height:103px;background:linear-gradient(90deg,#7a7a7a,#a0a0a0);"></div>
<div style="position:absolute;left:989px;top:686px;width:169px;height:2px;background:linear-gradient(#8a8a8a,#a8a8a8)"></div>
<div style="position:absolute;left:1157px;top:688px;width:1px;height:100px;background:#d0d0d0"></div>
<div style="position:absolute;left:987px;top:788px;width:171px;height:1px;background:#c8c8c8"></div>
<svg style="position:absolute;left:989px;top:688px" width="168" height="100"><rect width="168" height="100" fill="#000"/><rect x="12" y="0" width="1" height="100" fill="#008000"/><rect x="27" y="0" width="1" height="100" fill="#008000"/><rect x="42" y="0" width="1" height="100" fill="#008000"/><rect x="57" y="0" width="1" height="100" fill="#008000"/><rect x="72" y="0" width="1" height="100" fill="#008000"/><rect x="87" y="0" width="1" height="100" fill="#008000"/><rect x="102" y="0" width="1" height="100" fill="#008000"/><rect x="117" y="0" width="1" height="100" fill="#008000"/><rect x="132" y="0" width="1" height="100" fill="#008000"/><rect x="147" y="0" width="1" height="100" fill="#008000"/><rect x="162" y="0" width="1" height="100" fill="#008000"/><rect x="0" y="10" width="168" height="1" fill="#008000"/><rect x="0" y="20" width="168" height="1" fill="#008000"/><rect x="0" y="30" width="168" height="1" fill="#008000"/><rect x="0" y="40" width="168" height="1" fill="#008000"/><rect x="0" y="50" width="168" height="1" fill="#008000"/><rect x="0" y="60" width="168" height="1" fill="#008000"/><rect x="0" y="70" width="168" height="1" fill="#008000"/><rect x="0" y="80" width="168" height="1" fill="#008000"/><rect x="0" y="90" width="168" height="1" fill="#008000"/></svg>
<div class="t" style="right:40px;top:790px;font-size:12px;color:#000;font-weight:normal;text-align:right;">0</div>
<div style="position:absolute;left:1160px;top:676px;width:6px;height:124px;box-sizing:border-box;border:1px solid #000;border-left:none"></div>
<div class="t" style="left:989px;top:807px;font-size:11.9px;color:#000;font-weight:normal;">Wi-Fi 3</div>
<div class="t" style="right:40px;top:807px;font-size:10.9px;color:#000;font-weight:normal;text-align:right;">100%</div>
<div style="position:absolute;left:987px;top:824px;width:171px;height:103px;background:linear-gradient(90deg,#7a7a7a,#a0a0a0);"></div>
<div style="position:absolute;left:989px;top:824px;width:169px;height:2px;background:linear-gradient(#8a8a8a,#a8a8a8)"></div>
<div style="position:absolute;left:1157px;top:826px;width:1px;height:100px;background:#d0d0d0"></div>
<div style="position:absolute;left:987px;top:926px;width:171px;height:1px;background:#c8c8c8"></div>
<svg style="position:absolute;left:989px;top:826px" width="168" height="100"><rect width="168" height="100" fill="#000"/><rect x="12" y="0" width="1" height="100" fill="#008000"/><rect x="27" y="0" width="1" height="100" fill="#008000"/><rect x="42" y="0" width="1" height="100" fill="#008000"/><rect x="57" y="0" width="1" height="100" fill="#008000"/><rect x="72" y="0" width="1" height="100" fill="#008000"/><rect x="87" y="0" width="1" height="100" fill="#008000"/><rect x="102" y="0" width="1" height="100" fill="#008000"/><rect x="117" y="0" width="1" height="100" fill="#008000"/><rect x="132" y="0" width="1" height="100" fill="#008000"/><rect x="147" y="0" width="1" height="100" fill="#008000"/><rect x="162" y="0" width="1" height="100" fill="#008000"/><rect x="0" y="10" width="168" height="1" fill="#008000"/><rect x="0" y="20" width="168" height="1" fill="#008000"/><rect x="0" y="30" width="168" height="1" fill="#008000"/><rect x="0" y="40" width="168" height="1" fill="#008000"/><rect x="0" y="50" width="168" height="1" fill="#008000"/><rect x="0" y="60" width="168" height="1" fill="#008000"/><rect x="0" y="70" width="168" height="1" fill="#008000"/><rect x="0" y="80" width="168" height="1" fill="#008000"/><rect x="0" y="90" width="168" height="1" fill="#008000"/></svg>
<div class="t" style="right:40px;top:928px;font-size:12px;color:#000;font-weight:normal;text-align:right;">0</div>
<div style="position:absolute;left:1160px;top:814px;width:6px;height:124px;box-sizing:border-box;border:1px solid #000;border-left:none"></div>
<div style="position:absolute;left:0;top:0;width:1195px;height:1px;background:#171717"></div>
<div style="position:absolute;left:0;top:0;width:1px;height:923px;background:#171717"></div>
<div style="position:absolute;right:0;top:0;width:1px;height:923px;background:#a0a0a0"></div>
<div style="position:absolute;left:0;bottom:0;width:1195px;height:1px;background:#a0a0a0"></div>
</div>
</body></html>
